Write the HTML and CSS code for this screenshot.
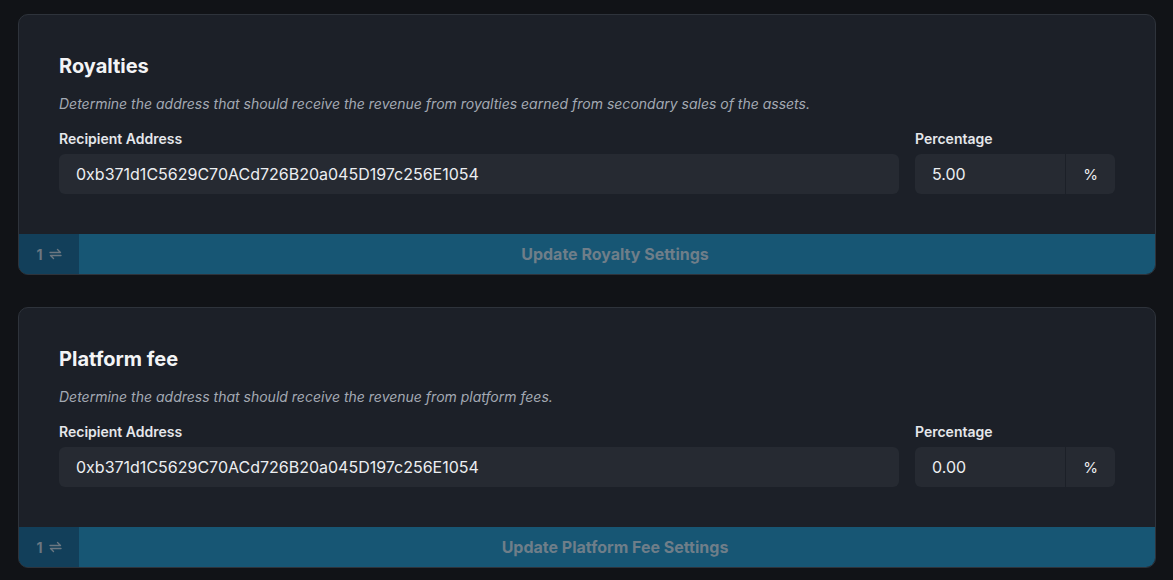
FILE: index.html
```html
<!DOCTYPE html>
<html>
<head>
<meta charset="utf-8">
<link rel="stylesheet" href="styles.css">
</head>
<body>
<div class="page">
  <section class="card">
    <div class="card-body">
      <h2 class="title">Royalties</h2>
      <p class="desc">Determine the address that should receive the revenue from royalties earned from secondary sales of the assets.</p>
      <div class="fields">
        <div class="field field-address">
          <label class="label">Recipient Address</label>
          <div class="input">0xb371d1C5629C70ACd726B20a045D197c256E1054</div>
        </div>
        <div class="field field-pct">
          <label class="label">Percentage</label>
          <div class="input-group">
            <div class="input input-pct">5.00</div>
            <div class="addon">%</div>
          </div>
        </div>
      </div>
    </div>
    <div class="action">
      <div class="tx-count">1
        <svg class="swap" width="13" height="12" viewBox="0 0 13 12"><path d="M1 4.5H11.5L8.5 1.5M12 7.5H1.5L4.5 10.5" fill="none" stroke="currentColor" stroke-width="1.4" stroke-linecap="round" stroke-linejoin="round"/></svg>
      </div>
      <button class="action-btn">Update Royalty Settings</button>
    </div>
  </section>

  <section class="card">
    <div class="card-body">
      <h2 class="title">Platform fee</h2>
      <p class="desc">Determine the address that should receive the revenue from platform fees.</p>
      <div class="fields">
        <div class="field field-address">
          <label class="label">Recipient Address</label>
          <div class="input">0xb371d1C5629C70ACd726B20a045D197c256E1054</div>
        </div>
        <div class="field field-pct">
          <label class="label">Percentage</label>
          <div class="input-group">
            <div class="input input-pct">0.00</div>
            <div class="addon">%</div>
          </div>
        </div>
      </div>
    </div>
    <div class="action">
      <div class="tx-count">1
        <svg class="swap" width="13" height="12" viewBox="0 0 13 12"><path d="M1 4.5H11.5L8.5 1.5M12 7.5H1.5L4.5 10.5" fill="none" stroke="currentColor" stroke-width="1.4" stroke-linecap="round" stroke-linejoin="round"/></svg>
      </div>
      <button class="action-btn">Update Platform Fee Settings</button>
    </div>
  </section>
</div>
</body>
</html>
```

FILE: styles.css
```css
* { box-sizing: border-box; }
html, body {
  margin: 0;
  padding: 0;
  background: #111317;
  font-family: Inter, "Noto Sans", sans-serif;
  color: #e8eaed;
}
.page {
  padding: 14px 17px 0 18px;
  display: flex;
  flex-direction: column;
  gap: 32px;
}
.card {
  background: #1c2028;
  border: 1px solid #2e333b;
  border-radius: 10px;
  overflow: hidden;
}
.card-body {
  padding: 38px 40px 40px 40px;
}
.title {
  margin: 0;
  font-size: 20px;
  line-height: 26px;
  font-weight: 700;
  color: #f3f4f6;
}
.desc {
  margin: 15px 0 0 0;
  font-size: 14px;
  line-height: 20px;
  font-style: italic;
  color: #a3a9b3;
}
.fields {
  margin-top: 15px;
  display: flex;
  gap: 16px;
}
.field { display: flex; flex-direction: column; }
.field-address { flex: 1; }
.field-pct { width: 200px; }
.label {
  font-size: 14px;
  line-height: 20px;
  font-weight: 600;
  color: #e5e7eb;
  margin-bottom: 5px;
}
.input {
  height: 40px;
  background: #262a32;
  border-radius: 6px;
  padding: 0 17px;
  display: flex;
  align-items: center;
  font-size: 16px;
  color: #eceef1;
}
.input-group {
  display: flex;
  height: 40px;
  background: #262a32;
  border-radius: 6px;
}
.input-pct {
  flex: 1;
  background: transparent;
  border-right: 1px solid #1c2028;
  border-radius: 0;
}
.addon {
  width: 49px;
  display: flex;
  align-items: center;
  justify-content: center;
  font-size: 15px;
  color: #eceef1;
}
.action {
  display: flex;
  height: 40px;
  background: #175674;
}
.tx-count {
  width: 60px;
  background: #123f5a;
  display: flex;
  align-items: center;
  justify-content: center;
  gap: 6px;
  font-size: 14px;
  font-weight: 700;
  color: #6b7781;
}
.swap { display: block; }
.action-btn {
  flex: 1;
  background: transparent;
  border: 0;
  font-family: inherit;
  font-size: 16px;
  font-weight: 700;
  color: #6f7e89;
  padding: 0 4px 0 0;
  cursor: not-allowed;
}
```
